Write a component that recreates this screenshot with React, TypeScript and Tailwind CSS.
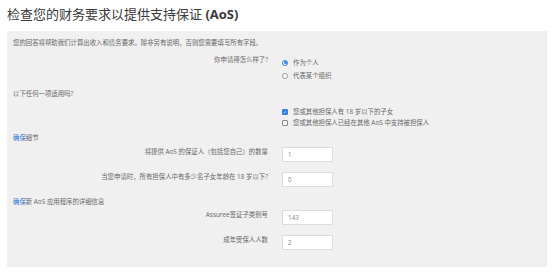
const font = { fontFamily: '"Open Sans", "Noto Sans CJK SC", sans-serif' };

function Radio({ checked, label }: { checked?: boolean; label: string }) {
  return (
    <div className="flex h-[13px] items-center">
      <span
        className={`flex h-[6px] w-[6px] items-center justify-center rounded-full border bg-white ${
          checked ? "border-[#2f80ed]" : "border-[#9a9a9a]"
        }`}
      >
        {checked && <span className="h-[3px] w-[3px] rounded-full bg-[#2f80ed]" />}
      </span>
      <span className="ml-[5px]">{label}</span>
    </div>
  );
}

function Check({ checked, label }: { checked?: boolean; label: string }) {
  return (
    <div className="flex h-[11px] items-center">
      <span
        className={`flex h-[6px] w-[6px] items-center justify-center rounded-[1px] border ${
          checked ? "border-[#2f80ed] bg-[#2f80ed]" : "border-[#8a8a8a] bg-white"
        }`}
      >
        {checked && (
          <svg viewBox="0 0 10 10" className="h-[6px] w-[6px]">
            <path d="M2 5.2l2 2 4-4.4" fill="none" stroke="#fff" strokeWidth="1.6" />
          </svg>
        )}
      </span>
      <span className="ml-[5px]">{label}</span>
    </div>
  );
}

function Field({ label, value, className = "" }: { label: string; value: string; className?: string }) {
  return (
    <div className={`flex items-start ${className}`}>
      <div className="w-[261px] text-right leading-[10px]">{label}</div>
      <div className="ml-[14px] flex h-[15px] w-[51px] items-center border border-[#dcdcdc] bg-white pl-[5px] text-[#888]">
        {value}
      </div>
    </div>
  );
}

export default function App() {
  return (
    <div className="h-[274px] w-[554px] bg-white" style={font}>
      <h1 className="px-[7px] pt-[6px] text-[13px] leading-[17px] font-normal text-[#3a3a3a]">
        检查您的财务要求以提供支持保证 <span className="font-bold">(AoS)</span>
      </h1>
      <div className="mx-[7px] mt-[8px] h-[236px] bg-[#f0f0f0] pt-[7px] text-[6.4px] text-[#666]">
        <p className="pl-[6px] leading-[10px]">
          您的回答将帮助我们计算出收入和债务要求。除非另有说明，否则您需要填写所有字段。
        </p>

        <div className="mt-[7px] flex items-start">
          <div className="w-[261px] text-right leading-[10px]">你申请得怎么样了?</div>
          <div className="ml-[14px] pt-[1px]">
            <Radio checked label="作为个人" />
            <Radio label="代表某个组织" />
          </div>
        </div>

        <p className="mt-[7px] pl-[6px] leading-[10px]">以下任何一项适用吗?</p>

        <div className="mt-[7px] ml-[275px]">
          <Check checked label="您或其他担保人有 18 岁以下的子女" />
          <Check label="您或其他担保人已经在其他 AoS 中支持被担保人" />
        </div>

        <p className="mt-[5px] pl-[6px] leading-[10px]">
          <span className="text-[#2f6fd1]">确保</span>细节
        </p>

        <Field className="mt-[4px]" label="将提供 AoS 的保证人（包括您自己）的数量" value="1" />
        <Field className="mt-[10px]" label="当您申请时，所有担保人中有多少名子女年龄在 18 岁以下?" value="0" />

        <p className="mt-[10px] pl-[6px] leading-[10px]">
          <span className="text-[#2f6fd1]">确保</span>新 AoS 应用程序的详细信息
        </p>

        <Field className="mt-[3px]" label="Assuree签证子类别号" value="143" />
        <Field className="mt-[10px]" label="成年受保人人数" value="2" />
      </div>
    </div>
  );
}
